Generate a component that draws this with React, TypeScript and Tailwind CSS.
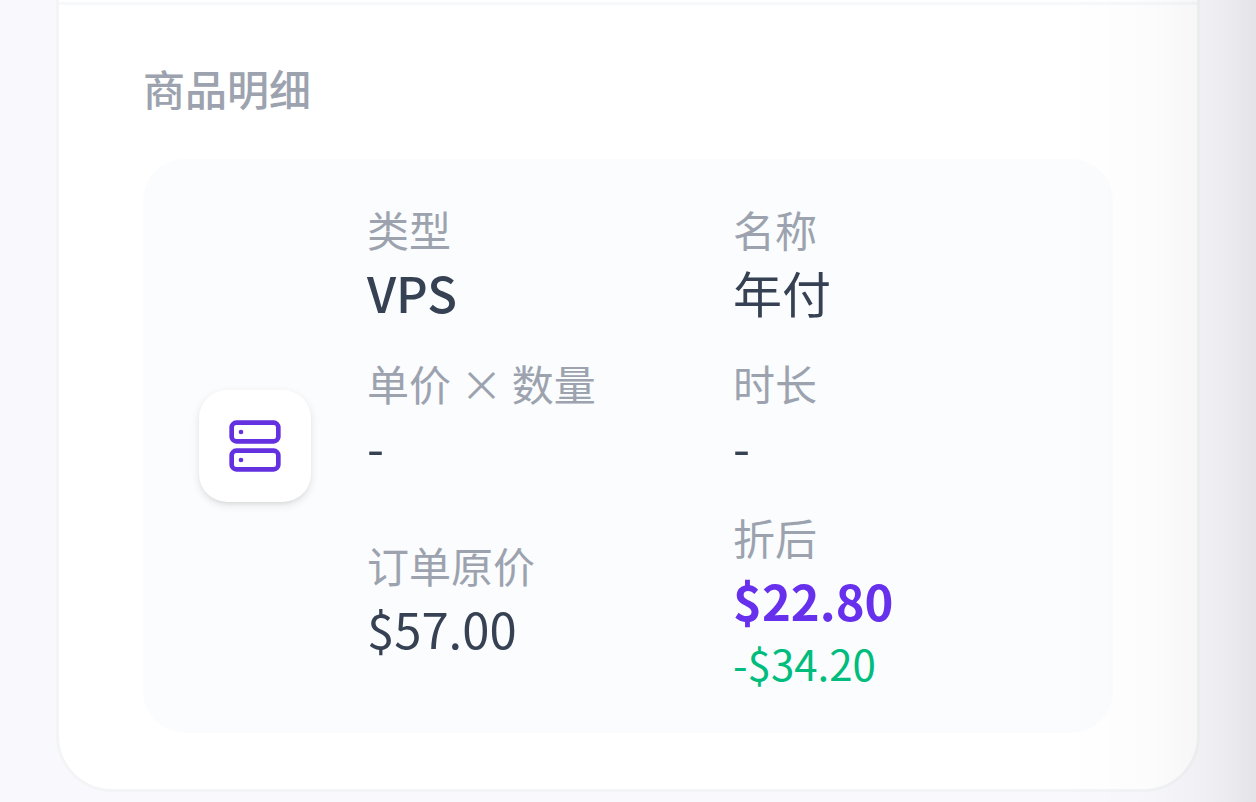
import React from "react";
import { Server } from "lucide-react";

interface Field {
  label: string;
  value: string;
  valueClass: string;
  discount?: string;
}

const fields: Field[] = [
  { label: "类型", value: "VPS", valueClass: "font-medium text-[#364153]" },
  { label: "名称", value: "年付", valueClass: "text-[#364153]" },
  { label: "单价 × 数量", value: "-", valueClass: "text-[#364153]" },
  { label: "时长", value: "-", valueClass: "text-[#364153]" },
  { label: "订单原价", value: "$57.00", valueClass: "text-[#364153]" },
  {
    label: "折后",
    value: "$22.80",
    valueClass: "font-semibold text-[#6730ec]",
    discount: "-$34.20",
  },
];

const ProductDetails: React.FC = () => {
  return (
    <section className="border-t-[3px] border-[#f7f8fa] px-21 pt-[55px] pb-14">
      <h2 className="text-[42px] leading-14 font-medium text-[#9ca3af]">
        商品明细
      </h2>

      <div className="mt-[43px] flex items-center gap-14 rounded-[42px] bg-[#fafcfd] px-14 py-[42px]">
        <div className="flex size-28 shrink-0 items-center justify-center rounded-[28px] bg-white shadow-[0_3px_8px_0_rgba(0,0,0,0.1),0_3px_5px_-3px_rgba(0,0,0,0.1)]">
          <Server className="size-14 text-[#6331e0]" aria-hidden="true" />
        </div>

        <dl className="grid flex-1 grid-cols-2 items-center gap-x-[42px] gap-y-7">
          {fields.map((field) => (
            <div key={field.label}>
              <dt className="text-[42px] leading-14 text-[#9ca3af]">
                {field.label}
              </dt>
              <dd className={`text-[49px] leading-[70px] ${field.valueClass}`}>
                {field.value}
              </dd>
              {field.discount && (
                <dd className="text-[42px] leading-14 text-[#00bc7d]">
                  {field.discount}
                </dd>
              )}
            </div>
          ))}
        </dl>
      </div>
    </section>
  );
};

export default function App() {
  return (
    <main
      lang="zh-CN"
      className="relative min-h-screen bg-[#f8f8fd] px-14 pb-2.5 font-['Noto_Sans_CJK_SC',sans-serif]"
    >
      <div className="rounded-b-[56px] border-x-[3px] border-b-[3px] border-[#f3f4f6] bg-white pt-0.5">
        <ProductDetails />
      </div>

      {/* edge shade */}
      <div
        className="pointer-events-none absolute inset-y-0 right-0 w-48 bg-[linear-gradient(to_right,rgba(0,0,0,0)_0%,rgba(0,0,0,0.012)_45%,rgba(0,0,0,0.03)_68%,rgba(0,0,0,0.05)_84%,rgba(0,0,0,0.082)_100%)]"
        aria-hidden="true"
      />
    </main>
  );
}
